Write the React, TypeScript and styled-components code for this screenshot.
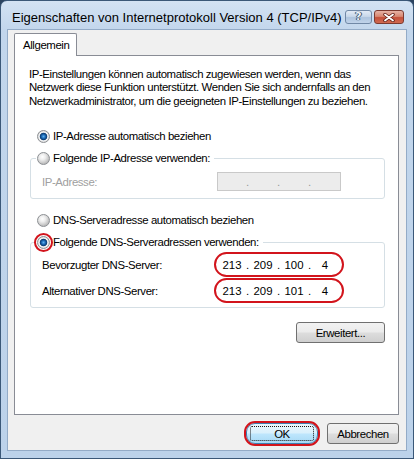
import React from "react";
import styled, { createGlobalStyle, css } from "styled-components";

// Global

const GlobalStyle = createGlobalStyle`
  html, body {
    margin: 0;
    padding: 0;
    background: #2c4460;
  }
  body {
    font-family: "Liberation Sans", Arial, sans-serif;
    font-size: 11.4px;
    letter-spacing: -0.4px;
    color: #000;
  }
`;

// Window frame

const Window = styled.div`
  box-sizing: border-box;
  width: 414px;
  height: 459px;
  display: flex;
  flex-direction: column;
  padding: 0 6px 7px 6px;
  border: 1px solid #3b5878;
  border-radius: 7px 7px 0 0;
  background: linear-gradient(180deg, #d3e2f3 0%, #c2d6ec 30px, #bcd2ea 100%);
`;

const TitleBar = styled.div`
  height: 28px;
  flex: none;
  display: flex;
  align-items: center;
  padding: 4px 3px 0 5px;
  box-sizing: border-box;
`;

const Title = styled.div`
  flex: 1;
  font-size: 13px;
  letter-spacing: 0;
  color: #000;
  white-space: nowrap;
`;

const CaptionButtons = styled.div`
  display: flex;
  gap: 2px;
`;

const CaptionButton = styled.div<{ $close?: boolean }>`
  height: 14px;
  width: ${(p) => (p.$close ? "30px" : "27px")};
  box-sizing: border-box;
  border-radius: 3px;
  display: flex;
  align-items: center;
  justify-content: center;
  ${(p) =>
    p.$close
      ? css`
          border: 1px solid #7c3a30;
          background: linear-gradient(180deg, #e6b3a6 0%, #d88872 45%, #c4503a 55%, #d06a52 100%);
        `
      : css`
          border: 1px solid #7088a6;
          background: linear-gradient(180deg, #e2ebf6 0%, #c9d8ea 45%, #aec4de 55%, #c0d3ea 100%);
        `}
`;

const HelpGlyph = styled.span`
  font-family: "DejaVu Sans", sans-serif;
  font-weight: bold;
  font-size: 11px;
  line-height: 12px;
  letter-spacing: 0;
  color: #eef3fa;
  text-shadow: 0 0 1px #34475f, 0 0 1px #34475f, 1px 0 0 #4a5e78, -1px 0 0 #4a5e78;
`;

// Client area

const Client = styled.div`
  flex: 1;
  display: flex;
  flex-direction: column;
  background: #f0f0f0;
  border: 1px solid #93abc7;
  padding: 3px 7px 6px 6px;
  min-height: 0;
`;

const TabStrip = styled.div`
  height: 22px;
  flex: none;
  display: flex;
`;

const Tab = styled.div`
  position: relative;
  z-index: 1;
  height: 23px;
  box-sizing: border-box;
  width: 63px;
  padding-left: 8px;
  display: flex;
  align-items: center;
  background: #fff;
  border: 1px solid #898c95;
  border-bottom: none;
  border-radius: 2px 2px 0 0;
`;

const Panel = styled.div`
  flex: 1;
  display: flex;
  flex-direction: column;
  background: #fff;
  border: 1px solid #898c95;
  padding: 12px 13px 0 15px;
`;

const Intro = styled.p`
  margin: 0 0 0 -1px;
  line-height: 13.4px;
  white-space: nowrap;
`;

const OptionRow = styled.div<{ $gap: number }>`
  margin-top: ${(p) => p.$gap}px;
  padding-left: 7px;
  height: 16px;
  display: flex;
  align-items: center;
`;

const Option = styled.label`
  display: flex;
  align-items: center;
  gap: 3px;
  height: 16px;
`;

const Radio = styled.span<{ $checked?: boolean; $marked?: boolean }>`
  width: 13px;
  height: 13px;
  box-sizing: border-box;
  border-radius: 50%;
  border: 1px solid #8c8f93;
  background: ${(p) =>
    p.$checked
      ? "radial-gradient(circle at 50% 50%, #5fb0f0 0, #1a66b0 2px, #0b3b70 3.4px, #fafafa 4.2px, #e6e6e6 5px, #c6c6c6 6.5px)"
      : "radial-gradient(circle at 40% 35%, #ffffff 0, #ededed 3px, #d6d6d6 5px, #bdbdbd 7px)"};
  ${(p) =>
    p.$marked &&
    css`
      outline: 2px solid #d2141c;
      outline-offset: 1px;
    `}
`;

const Group = styled.fieldset<{ $gap: number }>`
  margin: ${(p) => p.$gap}px 0 0 0;
  padding: 0 11px 7px 5px;
  border: 1px solid #d5dfe5;
  border-radius: 3px;
  min-width: 0;
`;

const Legend = styled.legend`
  padding: 0 4px 0 1px;
  height: 16px;
`;

const FieldRow = styled.div<{ $gap: number }>`
  margin-top: ${(p) => p.$gap}px;
  padding-left: 6px;
  display: flex;
  align-items: center;
  height: 19px;
`;

const FieldLabel = styled.span<{ $disabled?: boolean }>`
  width: 175px;
  color: ${(p) => (p.$disabled ? "#a0a0a0" : "#000")};
`;

const IpField = styled.div<{ $disabled?: boolean; $marked?: boolean }>`
  width: 124px;
  height: 19px;
  box-sizing: border-box;
  display: flex;
  align-items: center;
  padding-left: 3px;
  border: 1px solid ${(p) => (p.$disabled ? "#c9c9c9" : "#abadb3")};
  background: ${(p) => (p.$disabled ? "#ececec" : "#fff")};
  color: ${(p) => (p.$disabled ? "#9a9a9a" : "#000")};
  ${(p) =>
    p.$marked &&
    css`
      border-color: transparent;
      border-radius: 11px;
      outline: 2px solid #d2141c;
      outline-offset: 1px;
    `}
`;

const Octet = styled.span`
  width: 22px;
  text-align: center;
  letter-spacing: 0;
`;

const Dot = styled.span`
  width: 9px;
  text-align: center;
`;

const PushButton = styled.button<{ $width: number; $default?: boolean; $marked?: boolean }>`
  position: relative;
  width: ${(p) => p.$width}px;
  height: 21px;
  padding: 0;
  font: inherit;
  letter-spacing: inherit;
  color: #000;
  border-radius: 3px;
  border: 1px solid #707070;
  background: linear-gradient(180deg, #f2f2f2 0%, #ebebeb 48%, #dddddd 52%, #cfcfcf 100%);
  ${(p) =>
    p.$default &&
    css`
      border-color: #3c7fb1;
      background: linear-gradient(180deg, #eaf6fd 0%, #d9f0fc 48%, #bee6fd 52%, #a7d9f5 100%);
      &::after {
        content: "";
        position: absolute;
        inset: 2px 3px;
        border: 1px dotted #1a1a1a;
        border-radius: 2px;
      }
    `}
  ${(p) =>
    p.$marked &&
    css`
      border-radius: 9px;
      outline: 2px solid #d2141c;
      outline-offset: 0;
    `}
`;

const AdvancedRow = styled.div`
  margin-top: 14px;
  display: flex;
  justify-content: flex-end;
`;

const Footer = styled.div`
  margin-top: 8px;
  display: flex;
  justify-content: flex-end;
  gap: 9px;
`;

function IpAddress({ parts, disabled, marked }: { parts: string[]; disabled?: boolean; marked?: boolean }) {
  return (
    <IpField $disabled={disabled} $marked={marked}>
      {parts.map((part, i) => (
        <React.Fragment key={i}>
          <Octet>{part}</Octet>
          {i < 3 && <Dot>.</Dot>}
        </React.Fragment>
      ))}
    </IpField>
  );
}

function App() {
  return (
    <>
      <GlobalStyle />
      <Window>
        <TitleBar>
          <Title>Eigenschaften von Internetprotokoll Version 4 (TCP/IPv4)</Title>
          <CaptionButtons>
            <CaptionButton>
              <HelpGlyph>?</HelpGlyph>
            </CaptionButton>
            <CaptionButton $close>
              <svg width="12" height="9" viewBox="0 0 12 9">
                <path d="M2 1.5 L10 7.5 M10 1.5 L2 7.5" stroke="#5a1810" strokeWidth="3.4" strokeLinecap="round" />
                <path d="M2 1.5 L10 7.5 M10 1.5 L2 7.5" stroke="#ffffff" strokeWidth="1.8" strokeLinecap="round" />
              </svg>
            </CaptionButton>
          </CaptionButtons>
        </TitleBar>
        <Client>
          <TabStrip>
            <Tab>Allgemein</Tab>
          </TabStrip>
          <Panel>
            <Intro>
              IP-Einstellungen können automatisch zugewiesen werden, wenn das
              <br />
              Netzwerk diese Funktion unterstützt. Wenden Sie sich andernfalls an den
              <br />
              Netzwerkadministrator, um die geeigneten IP-Einstellungen zu beziehen.
            </Intro>
            <OptionRow $gap={20}>
              <Option>
                <Radio $checked />
                IP-Adresse automatisch beziehen
              </Option>
            </OptionRow>
            <Group $gap={6}>
              <Legend>
                <Option>
                  <Radio />
                  Folgende IP-Adresse verwenden:
                </Option>
              </Legend>
              <FieldRow $gap={6}>
                <FieldLabel $disabled>IP-Adresse:</FieldLabel>
                <IpAddress parts={["", "", "", ""]} disabled />
              </FieldRow>
            </Group>
            <OptionRow $gap={13}>
              <Option>
                <Radio />
                DNS-Serveradresse automatisch beziehen
              </Option>
            </OptionRow>
            <Group $gap={6}>
              <Legend>
                <Option>
                  <Radio $checked $marked />
                  Folgende DNS-Serveradressen verwenden:
                </Option>
              </Legend>
              <FieldRow $gap={5}>
                <FieldLabel>Bevorzugter DNS-Server:</FieldLabel>
                <IpAddress parts={["213", "209", "100", "4"]} marked />
              </FieldRow>
              <FieldRow $gap={7}>
                <FieldLabel>Alternativer DNS-Server:</FieldLabel>
                <IpAddress parts={["213", "209", "101", "4"]} marked />
              </FieldRow>
            </Group>
            <AdvancedRow>
              <PushButton $width={89}>Erweitert...</PushButton>
            </AdvancedRow>
          </Panel>
          <Footer>
            <PushButton $width={72} $default $marked>
              OK
            </PushButton>
            <PushButton $width={72}>Abbrechen</PushButton>
          </Footer>
        </Client>
      </Window>
    </>
  );
}

export default App;
